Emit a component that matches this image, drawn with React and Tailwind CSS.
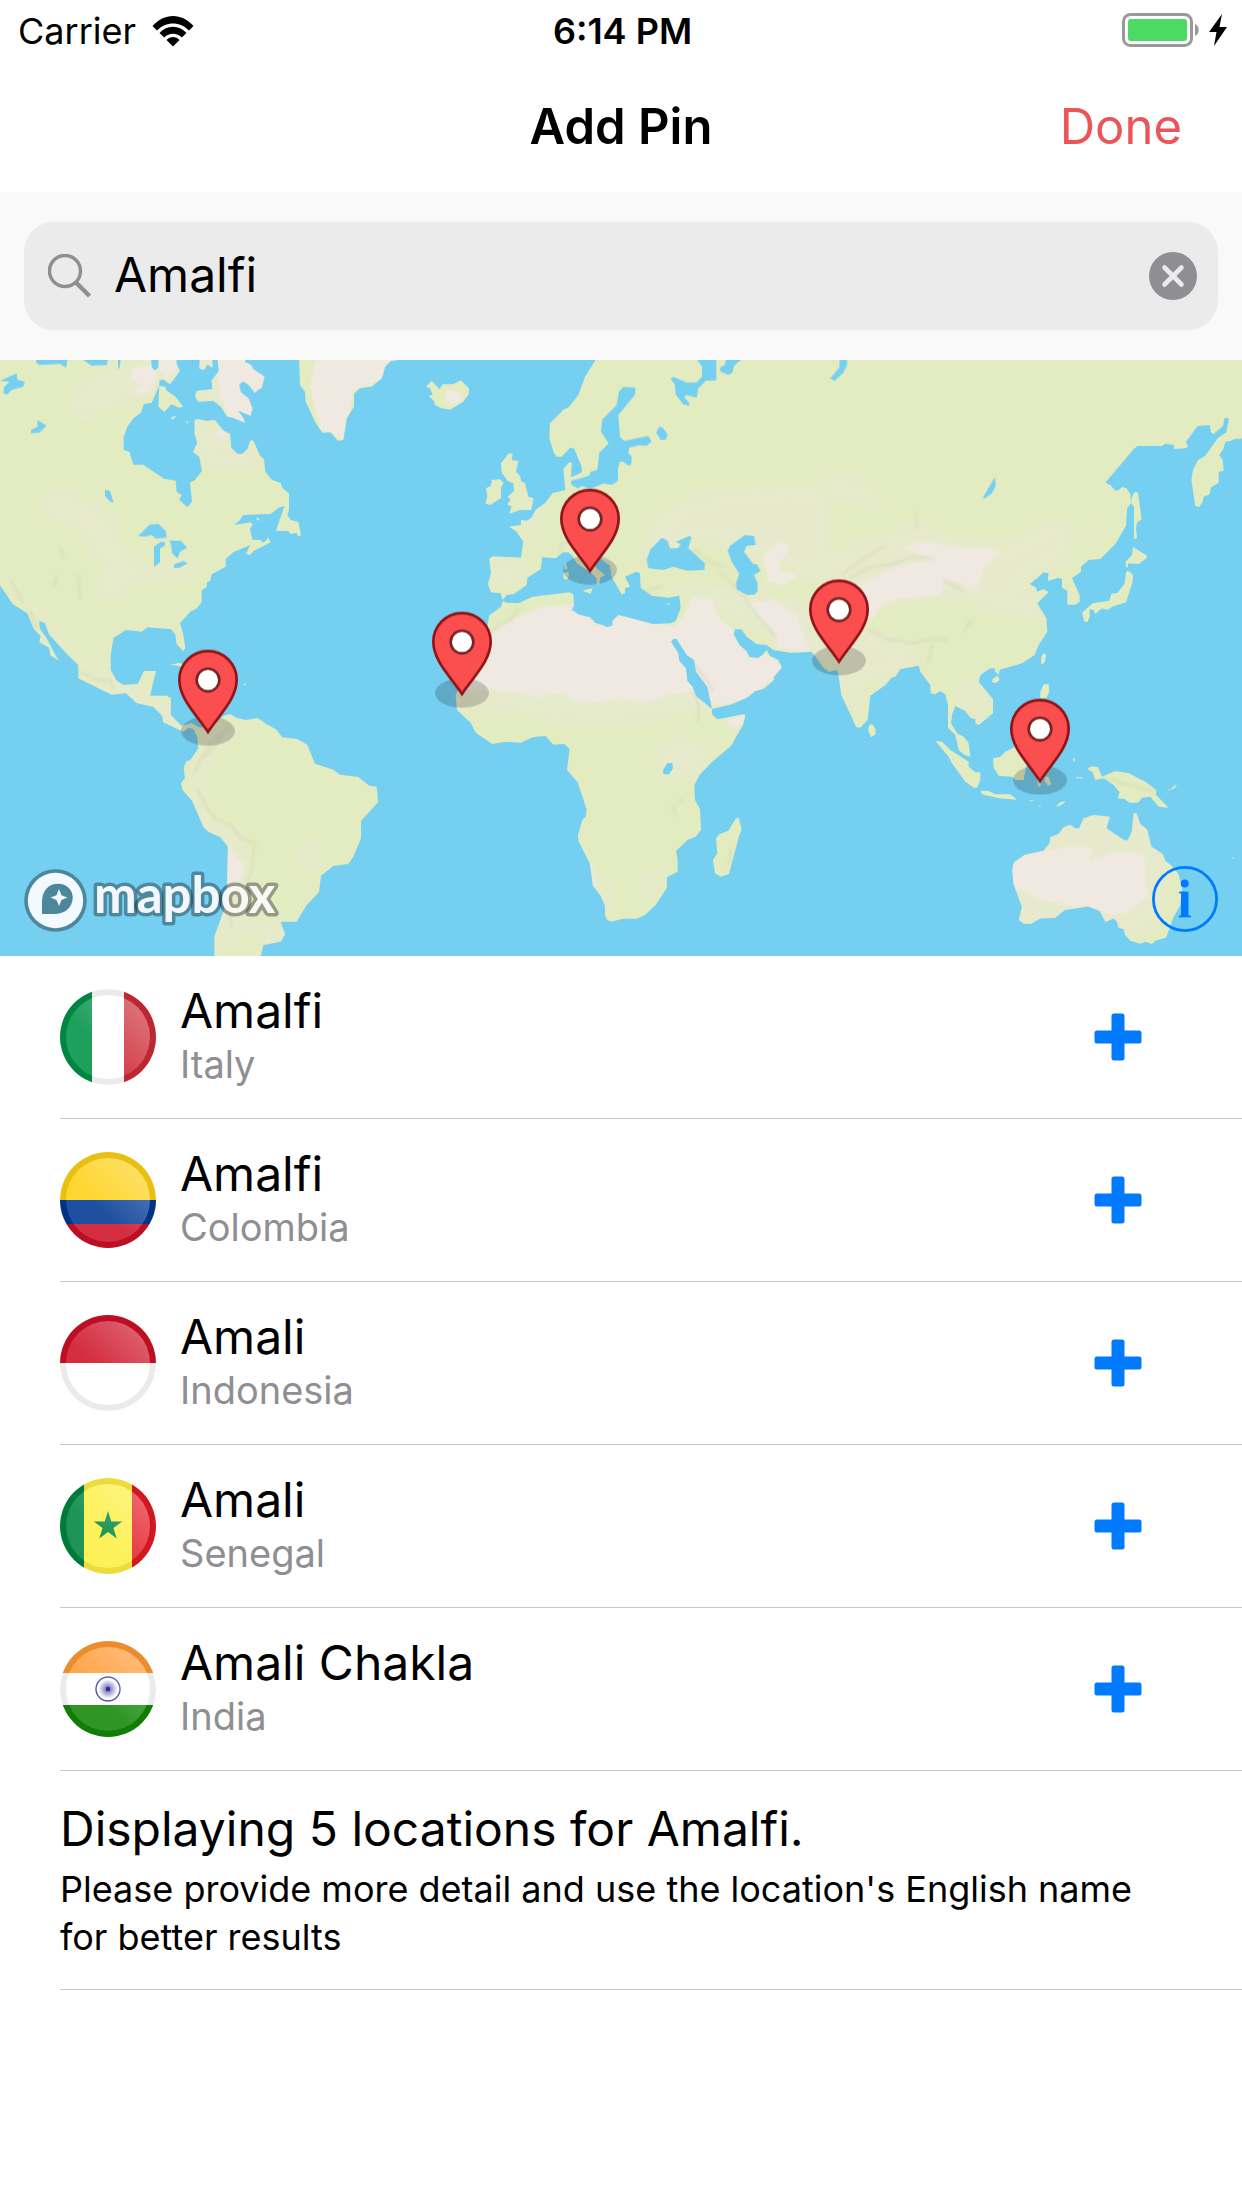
import React from "react";

/* Map geometry. Each column of the world is drawn in its own local space,
   then shifted into the shared 3726 x 1788 map space. */
const WEST = "translate(0 -15)";
const MID = "translate(1230 -15)";
const EAST = "translate(2466 -15)";

const LAND = [
  [WEST, "M-5,5 L455,5 475,5 528,5 530,28 540,48 510,88 490,73 478,75 477,93 455,143 432,147 422,174 402,188 382,215 371,245 371,285 388,290 400,329 430,329 492,371 527,377 530,410 545,420 538,434 562,457 576,440 570,383 585,375 606,347 598,305 579,290 592,265 584,235 584,195 593,192 620,198 645,195 670,227 690,237 693,278 712,297 727,297 742,283 752,255 760,257 780,302 792,313 796,350 815,374 842,384 848,400 867,415 867,465 862,480 872,495 895,500 903,542 893,542 890,533 873,537 863,528 828,527 853,454 838,457 812,477 730,480 720,495 702,510 752,502 758,508 750,522 757,554 780,555 790,563 800,555 805,547 812,562 762,587 750,600 738,596 750,571 702,590 677,612 677,635 635,658 630,678 621,682 620,697 605,706 605,742 588,762 573,768 540,804 550,840 556,880 550,889 530,868 526,838 513,823 443,817 425,830 378,825 341,848 332,900 332,945 350,978 370,990 413,987 432,948 468,948 450,1022 500,1022 513,1030 512,1080 545,1113 575,1105 600,1118 640,1110 670,1083 690,1077 710,1089 738,1095 773,1089 800,1108 828,1123 847,1147 892,1152 922,1170 945,1226 1000,1244 1020,1259 1075,1266 1108,1292 1130,1295 1134,1342 1083,1398 1083,1450 1060,1505 1045,1527 1000,1533 963,1562 957,1612 920,1650 890,1700 842,1700 855,1738 842,1760 790,1770 780,1815 643,1815 643,1745 672,1665 681,1610 684,1474 660,1445 625,1430 610,1415 577,1338 547,1304 543,1283 555,1270 551,1240 558,1220 573,1213 595,1180 592,1145 580,1122 565,1118 550,1130 490,1102 487,1083 460,1055 410,1044 378,1014 335,1019 235,970 235,930 203,899 147,838 135,804 117,798 120,822 140,850 166,900 178,917 152,902 147,878 118,862 122,843 102,823 82,775 38,747 -5,683Z"],
  [WEST, "M478,93 495,95 500,107 525,124 550,155 537,158 514,148 493,171 475,155Z M513,188 530,181 518,195Z M558,200 564,198 563,208Z M768,486 782,496 772,496Z"],
  [WEST, "M652,5 657,48 635,77 638,103 590,108 585,125 595,140 640,137 663,155 682,185 700,188 735,203 730,190 712,165 752,182 757,160 745,130 722,112 717,90 728,78 745,88 765,113 773,105 785,98 793,65 760,43 753,30 735,22 735,5Z M600,5 598,40 612,45 622,28 638,38 635,5Z"],
  [WEST, "M897,5 900,90 915,110 917,140 945,200 967,233 992,232 1013,257 1030,255 1040,190 1062,155 1062,118 1078,100 1115,95 1145,70 1155,35 1172,18 1195,15 1195,5Z"],
  [WEST, "M508,930 535,924 555,928 545,935 520,930Z M730,987 738,987 738,990 730,990Z"],
  [MID, "M48,95 65,78 75,88 88,103 98,88 130,88 152,76 177,100 176,118 160,140 120,164 95,160 75,150 72,138 57,124 68,118 60,100Z"],
  [MID, "M273,325 297,295 308,297 305,315 325,318 318,350 330,362 333,378 345,385 355,425 371,430 363,464 330,465 298,476 305,455 292,448 302,435 293,425 312,408 310,385 293,378 275,352Z M245,375 270,373 281,383 273,398 273,430 240,450 226,445 232,425 228,400 243,392Z"],
  [MID, "M563,5 525,65 505,120 475,158 462,163 420,205 418,250 432,295 440,305 455,305 480,278 492,280 515,335 516,352 483,367 485,322 478,322 460,342 466,405 428,414 405,445 377,465 365,488 352,497 333,495 333,510 297,515 318,528 340,560 333,608 248,604 238,612 243,655 234,687 243,712 272,715 278,735 290,720 312,717 350,690 352,668 392,643 397,607 437,610 460,592 475,592 487,602 500,625 545,655 560,670 560,690 568,686 570,668 585,660 560,640 540,615 565,605 600,632 605,665 635,718 645,715 645,700 660,695 645,665 680,650 690,655 692,698 725,722 775,728 808,722 812,760 797,798 780,805 730,808 625,780 608,797 608,812 592,817 555,803 540,787 508,780 484,765 492,750 490,718 478,712 368,725 325,745 290,743 278,738 273,755 237,782 230,830 165,960 137,1020 141,1065 182,1103 197,1133 247,1167 285,1160 332,1163 370,1146 407,1143 430,1169 463,1167 479,1182 471,1245 503,1282 530,1364 527,1385 517,1395 504,1440 505,1457 540,1525 549,1592 572,1622 585,1652 585,1680 592,1695 603,1700 640,1691 680,1691 705,1680 737,1650 770,1600 771,1567 803,1550 803,1515 798,1488 832,1455 857,1445 873,1425 870,1363 855,1335 853,1290 870,1258 905,1222 963,1173 1000,1108 1006,1080 1000,1078 922,1093 906,1078 906,1062 965,1048 1015,1025 1035,1008 1060,1002 1092,975 1092,965 1115,937 1105,915 1080,903 1070,885 1060,898 1045,910 1018,907 1010,890 988,870 970,838 975,823 995,823 1010,845 1040,867 1070,870 1090,885 1140,893 1205,890 1225,915 1245,945 1248,5Z"],
  [MID, "M978,1390 987,1390 995,1425 988,1440 957,1557 932,1565 915,1555 909,1515 922,1495 918,1450 928,1438 955,1427Z M465,622 473,640 463,645Z M460,655 475,650 477,663 470,675 461,670Z M520,706 548,700 542,716 520,708Z M484,374 508,372 502,380 494,376Z M640,295 648,293 648,300Z M770,746 778,743 778,749Z"],
  [EAST, "M0,5 1265,5 1265,250 1235,253 1225,258 1210,260 1205,280 1192,300 1202,315 1205,347 1190,350 1190,383 1167,397 1163,418 1145,425 1142,440 1132,456 1120,453 1108,375 1113,345 1128,315 1150,302 1187,250 1213,232 1221,190 1207,190 1203,212 1175,237 1167,232 1163,210 1127,213 1092,260 1098,275 1090,280 1057,282 1055,270 1030,266 1020,273 947,273 935,282 850,383 865,390 880,407 890,405 900,396 913,400 925,417 927,445 915,460 912,512 880,567 835,612 800,615 777,635 777,650 750,670 773,720 773,740 760,749 736,749 736,707 720,698 720,672 710,668 677,678 680,655 665,652 650,665 623,687 642,698 645,710 665,703 680,712 645,745 673,790 676,830 650,870 638,900 600,925 533,944 530,960 520,950 518,940 505,940 475,960 470,980 513,1033 513,1075 470,1110 460,1105 460,1092 445,1088 430,1068 400,1053 390,1080 387,1105 405,1135 425,1145 440,1165 445,1205 428,1200 410,1185 400,1140 378,1118 378,1050 370,1018 355,1008 340,1018 326,1015 325,990 295,950 290,932 235,942 220,965 210,967 190,990 145,1022 137,1095 115,1118 103,1117 58,1020 50,960 45,945 20,950 0,930Z"],
  [EAST, "M937,412 948,412 959,493 945,503 942,520 945,549 936,552 936,455 927,443 930,425Z M933,576 975,602 973,610 950,627 918,625 917,638 912,635 911,620 930,600Z M915,648 925,650 933,662 932,680 912,742 870,755 857,765 840,760 820,777 815,765 803,763 803,785 797,800 787,800 780,773 812,745 862,737 868,717 887,713 908,685 912,655Z"],
  [EAST, "M665,895 673,900 667,925 657,928 658,905Z M513,970 528,962 533,975 520,985 510,980Z M665,988 680,988 682,1008 673,1030 655,1030 655,1010Z M142,1110 150,1107 160,1120 161,1138 147,1147 138,1125Z"],
  [EAST, "M340,1158 360,1160 385,1185 440,1220 440,1235 460,1252 475,1252 475,1275 465,1298 455,1298 430,1280 390,1225 380,1205Z M475,1307 500,1308 520,1318 565,1318 585,1334 530,1330 480,1318Z M513,1210 535,1205 550,1190 590,1170 620,1200 612,1240 605,1275 580,1275 570,1265 530,1262 515,1238Z M645,1260 655,1260 656,1293 648,1295Z M670,1265 680,1265 688,1288 678,1292 668,1278Z M703,1353 715,1342 732,1338 722,1347 707,1355Z M753,1210 758,1210 758,1219 754,1220Z M622,1336 635,1336 635,1338 622,1338Z M648,1350 656,1352 655,1356Z M762,1267 782,1267 782,1270 762,1270Z"],
  [EAST, "M796,1242 808,1234 828,1237 840,1265 880,1248 920,1255 970,1280 1003,1305 1002,1320 1037,1355 1037,1358 1010,1355 985,1325 960,1328 948,1343 923,1343 907,1332 887,1330 893,1312 875,1290 845,1270 820,1275 812,1252Z M1035,1302 1045,1302 1065,1287 1058,1300 1040,1305Z M1230,1505 1238,1511 1234,1512Z"],
  [EAST, "M815,1380 863,1385 853,1420 905,1455 917,1457 930,1430 935,1375 943,1374 955,1408 975,1423 988,1475 1022,1497 1030,1518 1047,1530 1070,1558 1080,1600 1075,1650 1053,1690 1043,1720 1032,1748 1000,1757 990,1767 970,1760 955,1766 925,1757 910,1740 905,1722 890,1718 885,1700 875,1690 850,1700 833,1668 800,1654 728,1665 700,1688 655,1690 627,1706 605,1706 591,1695 600,1655 576,1590 571,1545 577,1522 608,1500 665,1487 683,1465 685,1447 710,1437 725,1417 745,1410 758,1420 772,1420 785,1390Z"],
];

const WATER = [
  [WEST, "M0,77 50,55 52,75 75,80 70,95 35,105 22,118 10,115 12,97 28,80Z M112,195 140,212 118,233 93,235 93,225 113,215Z M315,404 330,408 341,443 331,440 315,423Z M414,543 450,508 475,507 497,528 500,548 468,551 455,540 435,545Z M462,636 462,575 483,560 496,562 494,572 480,580 480,622Z M508,556 543,558 562,578 540,590 533,610 516,595 514,573Z M522,628 550,618 563,625 540,637 522,638Z M108,22 118,30 180,27 198,38 203,10 110,10Z M243,10 275,32 320,30 325,10Z M354,10 354,42 359,38 362,10Z M453,5 455,35 463,46 475,38 475,5Z"],
  [MID, "M640,95 676,98 676,118 625,180 630,245 642,258 715,243 725,260 710,272 685,271 658,278 655,293 665,305 664,328 655,332 640,320 630,320 624,340 624,378 605,390 582,385 540,402 515,393 505,400 484,390 483,377 505,372 537,362 542,350 562,345 568,293 596,265 573,230 577,193 620,150 627,110Z"],
  [MID, "M855,5 876,35 876,65 860,82 830,82 790,66 782,72 795,90 797,118 820,148 837,152 838,143 823,127 828,120 860,128 865,100 888,77 919,76 919,5Z M948,5 945,28 930,38 932,50 955,60 968,52 972,32 1005,5Z M738,232 748,215 758,218 773,238 768,253 752,254Z"],
  [MID, "M755,548 773,557 780,580 803,580 812,568 798,560 840,542 844,550 835,580 885,625 883,645 830,647 790,635 760,645 715,640 710,615 720,585Z M953,588 960,572 1005,540 1032,543 1037,570 1010,573 1002,590 1030,628 1040,628 1052,648 1040,655 1032,660 1043,685 1043,708 1033,719 1008,719 980,703 978,683 988,657 965,620Z"],
  [MID, "M783,860 790,852 800,852 830,900 852,915 858,950 892,995 906,1062 858,1023 848,995 832,978 828,940 808,918 805,895Z M759,1245 772,1224 787,1224 789,1240 777,1258 760,1258Z"],
  [EAST, "M53,10 52,37 25,70 37,78 62,55 75,32 75,10Z M518,367 522,390 510,415 485,432 483,427Z"],
];

const BEIGE = [
  [WEST, "M270,60 470,0 560,40 460,130 380,120 320,180 220,190 200,130Z M120,420 180,400 260,430 350,500 360,570 440,640 530,610 610,600 560,670 430,670 350,740 280,730 310,620 230,520 130,490Z M560,190 700,220 800,310 760,340 640,360 590,300Z M-5,680 90,760 150,850 240,940 340,1030 300,960 200,870 100,740Z M560,0 800,0 800,210 600,150Z M300,930 420,990 560,1110 520,1130 340,1020Z M620,1130 760,1090 660,1180 600,1290 640,1400 720,1440 760,1560 740,1720 640,1800 660,1600 560,1350 570,1230Z M750,1690 850,1690 860,1760 790,1780Z M880,1500 920,1450 970,1490 920,1560Z"],
  [MID, "M440,200 480,170 490,210 440,240Z M700,520 820,430 980,400 1200,380 1260,430 1260,700 900,560 780,600 690,600Z M230,610 350,620 340,690 240,700Z M130,1000 900,1000 930,1060 800,1090 600,1110 440,1100 300,1080 140,1060Z M720,700 1000,700 1250,760 1250,950 1100,860 900,760Z M730,1180 820,1130 880,1170 960,1130 860,1260 760,1290Z M560,1530 600,1600 600,1700 540,1600Z M670,1560 760,1560 720,1640Z M330,430 400,430 390,560 340,540Z"],
  [EAST, "M0,350 120,370 190,440 150,470 0,420Z M0,600 300,500 420,560 540,570 660,500 720,480 760,560 720,640 660,650 540,780 380,730 200,760 100,700 0,720Z M560,740 660,700 680,800 560,790Z M780,530 850,500 820,580Z M0,880 140,820 300,880 240,960 120,1000 130,1110 60,1020Z M400,1000 460,960 500,1040 470,1110Z"],
  [EAST, "M560,1370 990,1370 1040,1540 1020,1700 900,1770 560,1720Z"],
];

const DESERT = [
  [WEST, "M400,40 460,30 470,60 450,110 390,115 430,90 395,75Z M480,10 530,10 530,45 500,70 475,40Z M650,5 800,5 800,110 750,210 690,190 660,120Z M655,230 680,228 672,252 655,245Z M945,15 1195,5 1150,70 1060,110 1030,256 990,230 965,228 945,160 930,100Z M684,1460 700,1490 730,1530 725,1570 680,1600Z"],
  [MID, "M105,110 130,104 155,120 150,142 125,150 108,135Z M230,850 270,812 340,780 400,755 500,748 560,810 650,780 790,815 815,790 850,725 905,735 930,790 1000,850 1130,940 1000,1040 920,1050 860,1010 770,1020 700,1045 640,1028 560,1043 495,1035 460,1012 380,1025 320,1010 240,1005 150,1010Z M1060,610 1105,560 1135,570 1130,600 1105,620 1110,650 1170,660 1120,690 1075,680Z M1010,745 1090,735 1160,780 1200,890 1100,880 1095,830Z M950,1095 1010,1080 985,1120 960,1115Z M505,1450 545,1530 560,1600 545,1590 530,1520Z"],
  [EAST, "M115,690 200,645 330,610 250,580 290,560 440,580 530,585 485,640 460,700 370,670 355,720 200,735 140,800Z"],
  [EAST, "M560,1610 571,1510 660,1490 740,1475 815,1480 800,1520 880,1490 970,1500 965,1560 980,1620 920,1670 870,1680 790,1655 720,1645 660,1635 600,1605Z"],
];

const RIDGES = [
  [WEST, "M665,1130 630,1165 600,1215 580,1260 M690,1110 650,1165 610,1210 M590,1300 625,1365 650,1395 690,1410 725,1450 765,1465 755,1540 740,1585 M30,670 70,745 M235,660 240,730 M240,950 290,975 330,975 340,1000 M180,575 190,610 M160,695 172,660 M690,1650 694,1720 M90,765 110,820"],
  [MID, "M450,600 455,570 480,560 M850,580 900,620 945,635 M930,650 980,700 1010,740 1100,850 M240,830 300,795 330,760 M850,1000 865,1050 865,1100 M790,1350 795,1380 M820,1330 808,1345 M965,1480 957,1530 M850,925 890,975 910,1010 M700,715 760,690"],
  [EAST, "M80,670 150,635 210,628 270,605 330,612 M60,660 140,600 190,570 M130,820 190,850 270,865 340,850 375,858 M450,790 425,830 M360,675 430,710 M280,470 285,520 M850,1270 920,1290 1000,1310 M330,870 320,920"],
];

const PINS = [
  { place: "Amalfi, Colombia", x: 624, y: 1122 },
  { place: "Amali, Senegal", x: 1386, y: 1008 },
  { place: "Amalfi, Italy", x: 1770, y: 639 },
  { place: "Amali Chakla, India", x: 2517, y: 911 },
  { place: "Amali, Indonesia", x: 3120, y: 1269 },
];

function Shapes({ items, ...rest }) {
  return (
    <g {...rest}>
      {items.map(([t, d], i) => (
        <path key={i} transform={t} d={d} />
      ))}
    </g>
  );
}

function WorldMap() {
  return (
    <svg viewBox="0 0 3726 1788" className="block h-auto w-full" role="img" aria-label="World map with search results">
      <defs>
        <clipPath id="land">
          {LAND.map(([t, d], i) => (
            <path key={i} transform={t} d={d} />
          ))}
        </clipPath>
        <filter id="soft-wide"><feGaussianBlur stdDeviation="20" /></filter>
        <filter id="soft"><feGaussianBlur stdDeviation="4" /></filter>
      </defs>
      <rect width="3726" height="1788" fill="#75cff1" />
      <Shapes items={LAND} fill="#e3ecc1" />
      <g clipPath="url(#land)">
        <Shapes items={BEIGE} fill="#e8e9d1" filter="url(#soft-wide)" opacity="0.7" />
        <Shapes items={DESERT} fill="#f0e9e2" filter="url(#soft)" />
        <Shapes items={RIDGES} fill="none" stroke="#c6cca6" strokeWidth="5" strokeLinejoin="round" opacity="0.5" filter="url(#soft)" />
      </g>
      <Shapes items={WATER} fill="#75cff1" />
      {PINS.map((p) => (
        <g key={p.place} transform={`translate(${p.x} ${p.y})`}>
          <title>{p.place}</title>
          <ellipse cx="0" cy="-9" rx="81" ry="44" fill="#000" opacity="0.18" />
          <path d="M0,-6 C-32,-56 -86,-104 -86,-163 A86,86 0 1 1 86,-163 C86,-104 32,-56 0,-6Z" fill="#fb4e4e" stroke="#921315" strokeWidth="8" />
          <circle cx="0" cy="-162" r="34" fill="#fff" stroke="#7a2424" strokeWidth="8" />
        </g>
      ))}
    </svg>
  );
}

function MapboxLogo() {
  return (
    <svg viewBox="0 -10 276 83" className="block h-[83px] w-[276px]" aria-hidden="true">
      <circle cx="31.5" cy="31.5" r="31.3" fill="#4c879c" />
      <circle cx="31.5" cy="31.5" r="27.7" fill="#f2faff" />
      <path d="M18,45 L18,33 C18,22 24,14.7 34,14.7 C42.5,14.7 48.7,20.5 48.7,28.5 C48.7,38.5 41,45 30,45Z" fill="#4c879c" />
      <path d="M35,20 37.5,26.2 43.5,28.5 37.5,31 35,37 32.5,31 26.5,28.5 32.5,26.2Z" fill="#f2faff" />
      <text
        x="70" y="44" fontSize="51" fontWeight="700" fill="#fff" fillOpacity="0.93"
        stroke="#000" strokeOpacity="0.34" strokeWidth="7" strokeLinejoin="round" paintOrder="stroke"
        className="font-[Lato,sans-serif]"
      >
        mapbox
      </text>
    </svg>
  );
}

const FLAGS = {
  Italy: (
    <>
      <rect width="32" height="96" fill="#009246" />
      <rect x="32" width="32" height="96" fill="#fff" />
      <rect x="64" width="32" height="96" fill="#ce2b37" />
    </>
  ),
  Colombia: (
    <>
      <rect width="96" height="48" fill="#fcd116" />
      <rect y="48" width="96" height="24" fill="#003893" />
      <rect y="72" width="96" height="24" fill="#ce1126" />
    </>
  ),
  Indonesia: (
    <>
      <rect width="96" height="48" fill="#ce1126" />
      <rect y="48" width="96" height="48" fill="#fff" />
    </>
  ),
  Senegal: (
    <>
      <rect width="24" height="96" fill="#00853f" />
      <rect x="24" width="48" height="96" fill="#fdef42" />
      <rect x="72" width="24" height="96" fill="#e31b23" />
      <path d="M48,33 51.3,43.5 62.3,43.5 53.4,50 56.8,60.5 48,54 39.2,60.5 42.6,50 33.7,43.5 44.7,43.5Z" fill="#00853f" />
    </>
  ),
  India: (
    <>
      <rect width="96" height="32" fill="#ff9933" />
      <rect y="32" width="96" height="32" fill="#fff" />
      <rect y="64" width="96" height="32" fill="#138808" />
      <circle cx="48" cy="48" r="12" fill="url(#chakra)" stroke="#3a3aa5" strokeWidth="1.4" />
      <circle cx="48" cy="48" r="2.2" fill="#000088" />
    </>
  ),
};

function Flag({ country }) {
  const clip = `flag-${country}`;
  const shine = `shine-${country}`;
  return (
    <svg viewBox="0 0 96 96" className="size-24 shrink-0" role="img" aria-label={`Flag of ${country}`}>
      <defs>
        <clipPath id={clip}><circle cx="48" cy="48" r="48" /></clipPath>
        <linearGradient id={shine} x1="0.4" y1="0.6" x2="0.9" y2="0.1">
          <stop offset="0" stopColor="#fff" stopOpacity="0.12" />
          <stop offset="1" stopColor="#fff" stopOpacity="0.34" />
        </linearGradient>
        <radialGradient id="chakra">
          <stop offset="0" stopColor="#3a3aa5" />
          <stop offset="0.8" stopColor="#fff" />
        </radialGradient>
      </defs>
      <g clipPath={`url(#${clip})`}>
        {FLAGS[country]}
        <circle cx="48" cy="48" r="42" fill={`url(#${shine})`} />
        <circle cx="48" cy="48" r="45" fill="none" stroke="#000" strokeOpacity="0.08" strokeWidth="6" />
      </g>
    </svg>
  );
}

const RESULTS = [
  { name: "Amalfi", country: "Italy" },
  { name: "Amalfi", country: "Colombia" },
  { name: "Amali", country: "Indonesia" },
  { name: "Amali", country: "Senegal" },
  { name: "Amali Chakla", country: "India" },
];

function StatusBar() {
  return (
    <div className="grid h-[60px] grid-cols-[1fr_auto_1fr] items-center pt-0.5 pr-[15px] pl-[18px] text-[36px] leading-10">
      <div className="flex items-center gap-4">
        <span>Carrier</span>
        <svg viewBox="0 0 42 32" className="h-8 w-[42px]" role="img" aria-label="Wi-Fi">
          <path d="M0.5,11 C12,-2.5 30,-2.5 41.5,11 L37,15.5 C28,6 14,6 5,15.5Z" />
          <path d="M7.5,18 C15,9.5 27,9.5 34.5,18 L29.8,22.5 C25,17.5 17,17.5 12.2,22.5Z" />
          <path d="M14.5,25 C18,21 24,21 27.5,25 L21,31.5Z" />
        </svg>
      </div>
      <span className="font-semibold">6:14 PM</span>
      <div className="flex items-center justify-end gap-2 pb-0.5">
        <svg viewBox="0 0 79 34" className="h-[34px] w-[79px]" role="img" aria-label="Battery full">
          <rect x="1.5" y="1.5" width="68" height="31" rx="7" fill="#fff" stroke="#999" strokeWidth="3" />
          <rect x="6" y="6" width="59" height="22" rx="3" fill="#4cd964" />
          <path d="M73,11 C78,13 78,21 73,23Z" fill="#999" />
        </svg>
        <svg viewBox="0 0 18 34" className="h-[34px] w-[18px]" role="img" aria-label="Charging">
          <path d="M13,1 L0,19 H7.5 L5,33 L18,14 H10.5Z" />
        </svg>
      </div>
    </div>
  );
}

export default function App() {
  return (
    <div className="min-h-screen w-full bg-white font-[Inter,'Liberation_Sans',sans-serif] text-black">
      <StatusBar />
      <header className="grid h-[132px] grid-cols-[1fr_auto_1fr] items-center px-[60px] pt-0.5 text-[49px] leading-[60px]">
        <span />
        <h1 className="font-semibold">Add Pin</h1>
        <button type="button" className="justify-self-end text-[#eb5558]">Done</button>
      </header>

      <search className="block bg-[#f9f9f9] px-6 py-[30px]">
        <label className="flex h-[108px] items-center rounded-[30px] bg-[#ebebeb] pr-[21px] pl-6">
          <svg viewBox="0 0 44 44" className="size-11 shrink-0" fill="none" stroke="#8e8e93" strokeWidth="3.4" aria-hidden="true">
            <circle cx="17" cy="17" r="15.5" />
            <path d="M28,28.5 L41.5,42" strokeWidth="4.4" />
          </svg>
          <input
            type="text"
            defaultValue="Amalfi"
            aria-label="Search location"
            className="ml-[22px] min-w-0 flex-1 bg-transparent pb-0.5 text-[48px] leading-[60px] outline-none"
          />
          <button type="button" aria-label="Clear search" className="shrink-0">
            <svg viewBox="0 0 48 48" className="size-12">
              <circle cx="24" cy="24" r="24" fill="#8e8e93" />
              <path d="M15.5,15.5 L32.5,32.5 M32.5,15.5 L15.5,32.5" stroke="#ebebeb" strokeWidth="4.6" strokeLinecap="round" />
            </svg>
          </button>
        </label>
      </search>

      <section className="relative">
        <WorldMap />
        <a href="#mapbox" aria-label="Mapbox" className="absolute bottom-3.5 left-6">
          <MapboxLogo />
        </a>
        <button type="button" aria-label="Map information" className="absolute right-6 bottom-6">
          <svg viewBox="0 0 66 66" className="size-[66px]" fill="#007aff">
            <circle cx="33" cy="33" r="31.6" fill="none" stroke="#007aff" strokeWidth="2.8" />
            <circle cx="32.7" cy="17.5" r="4" />
            <rect x="29" y="25.7" width="7.5" height="25" />
            <rect x="27" y="25.7" width="6" height="1.6" />
            <rect x="26.8" y="49.5" width="12.2" height="1.8" />
          </svg>
        </button>
      </section>

      <ul>
        {RESULTS.map((r, i) => (
          <li key={i} className="ml-[60px] flex h-[163px] items-center border-b border-[#c8c7cc] pr-[100px]">
            <Flag country={r.country} />
            <div className="ml-6 min-w-0 flex-1 pb-1.5">
              <p className="text-[48px] leading-[60px]">{r.name}</p>
              <p className="text-[38px] leading-[46px] text-[#8e8e93]">{r.country}</p>
            </div>
            <button type="button" aria-label={`Add ${r.name}, ${r.country}`} className="shrink-0">
              <svg viewBox="0 0 48 48" className="size-12" fill="#007aff">
                <rect x="17.5" y="0.5" width="13" height="47" rx="2.5" />
                <rect x="0.5" y="17.5" width="47" height="13" rx="2.5" />
              </svg>
            </button>
          </li>
        ))}
      </ul>

      <footer className="ml-[60px] border-b border-[#c8c7cc] pt-7 pr-[100px] pb-7">
        <p className="text-[48px] leading-[60px]">Displaying 5 locations for Amalfi.</p>
        <p className="mt-1.5 text-[36px] leading-[48px]">
          Please provide more detail and use the location's English name for better results
        </p>
      </footer>
    </div>
  );
}
